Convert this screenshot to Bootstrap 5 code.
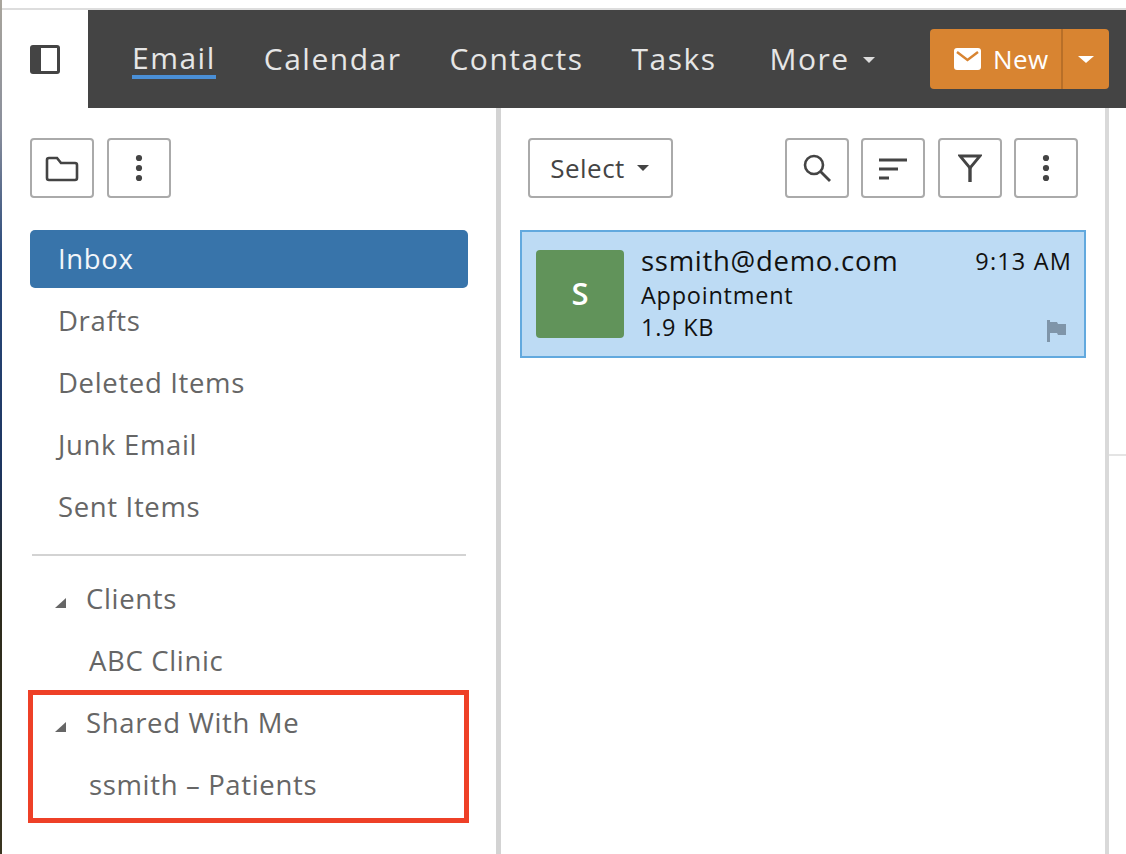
<!DOCTYPE html>
<html lang="en">
<head>
  <meta charset="UTF-8">
  <title>Email</title>
  <link href="https://cdn.jsdelivr.net/npm/bootstrap@5.3.3/dist/css/bootstrap.min.css" rel="stylesheet">
  <style>
    html, body { height: 100%; }
    body { width: 1126px; height: 854px; overflow: hidden; font-family: "Open Sans", sans-serif; padding-left: 2px;
      background: linear-gradient(#a9a59c 0, #8a8f9c 15%, #2a4a7c 30%, #1d3560 55%, #2c2a1c 70%, #3a3520 100%); }
    .app-shell { background: #fff; height: 854px; }
    .top-gap { height: 10px; border-bottom: 2px solid #ddd; }
    .toggle-cell { width: 86px; height: 98px; }
    .main-bar { height: 98px; background: #444; padding-left: 44px; padding-right: 17px; }
    .main-link { color: #e6e6e6; font-size: 30px; letter-spacing: 1.5px; text-decoration: none; margin-right: 48px; line-height: 40px; white-space: nowrap; }
    .main-link.current { border-bottom: 4px solid #4a8fd6; line-height: 35px; height: 39px; margin-top: 1px; }
    .main-link.tasks-link { margin-right: 53px; }
    .caret-down { display: inline-block; border-left: 6.5px solid transparent; border-right: 6.5px solid transparent; border-top: 6px solid currentColor; vertical-align: middle; }
    .more-caret { margin-left: 13px; color: #ddd; position: relative; top: -2px; }
    .new-group { margin-left: auto; width: 179px; height: 60px; background: #d88431; border-radius: 4px; color: #fff; }
    .new-main { width: 131px; padding-left: 24px; font-size: 26px; letter-spacing: .4px; }
    .new-split { width: 48px; height: 100%; border-left: 2px solid #b86f28; color: #fff; }
    .new-split .caret-down { border-left-width: 8px; border-right-width: 8px; border-top-width: 7px; }
    .folder-pane { width: 499px; border-right: 5px solid #d3d3d3; }
    .list-pane { width: 608px; border-right: 4px solid #d9d9d9; }
    .extra-pane { width: 17px; }
    .extra-top { height: 348px; border-bottom: 2px solid #e4e4e4; }
    .tool-btn { height: 60px; border: 2px solid #aaa; border-radius: 4px; background: #fff; color: #444; padding: 0; }
    .tool-wide { width: 64px; }
    .select-btn { width: 145px; font-size: 26px; letter-spacing: .5px; color: #444; padding-right: 2px; }
    .tool-row-a { padding: 30px 0 0 28px; gap: 13px; }
    .tool-row-b { padding: 30px 27px 0 27px; gap: 12.5px; }
    .folder-list { margin: 32px 28px 0 28px; }
    .folder-item { height: 62px; padding-left: 28px; font-size: 27.5px; letter-spacing: .65px; color: #666; white-space: nowrap; }
    .folder-item.picked { height: 58px; margin-bottom: 2px; background: #3874aa; color: #f2f6fa; border-radius: 5px; }
    .folder-sep { height: 2px; background: #d3d3d3; margin: 16px 2px 12px 2px; }
    .folder-item.tree-head { padding-left: 25px; }
    .tree-arrow { width: 11px; height: 10px; margin-right: 20px; margin-top: 8px; fill: #666; flex: none; }
    .shared-box { border: 5px solid #ee4027; margin: -2px -1px 0 -2px; }
    .shared-box .folder-item { margin-left: -3px; }
    .shared-box .tree-head { height: 56px; }
    .shared-box .tree-leaf { height: 67px; }
    .folder-item.tree-leaf { padding-left: 59px; }
    .mail-card { margin: 32px 0 0 19px; width: 566px; height: 128px; background: #bddbf4; border: 2px solid #62a9de; padding: 18px 12px 0 14px; color: #111; }
    .mail-avatar { width: 88px; height: 88px; background: #61935a; border-radius: 4px; color: #fff; font-size: 31px; font-weight: 600; flex: none; padding-bottom: 2px; }
    .mail-info { margin-left: 17px; margin-top: -7px; }
    .mail-from { font-size: 27.5px; letter-spacing: .72px; line-height: 36px; }
    .mail-line { font-size: 23.5px; letter-spacing: .75px; line-height: 32px; }
    .mail-time { font-size: 23.5px; letter-spacing: 1.15px; line-height: 36px; }
    .mail-flag { width: 20px; height: 22px; margin: 7px 6px 0 auto; fill: #7f95a9; display: block; }
  </style>
</head>
<body>
  <div class="app-shell d-flex flex-column">
    <div class="top-gap"></div>
    <header class="d-flex">
      <div class="toggle-cell d-flex align-items-center justify-content-center">
        <svg width="32" height="32" viewBox="0 0 32 32"><rect x="1" y="2" width="30" height="29" rx="3" fill="#444"/><rect x="12" y="5" width="16" height="23" fill="#fff"/></svg>
      </div>
      <nav class="main-bar flex-grow-1 d-flex align-items-center">
        <a class="main-link current" href="#">Email</a>
        <a class="main-link" href="#">Calendar</a>
        <a class="main-link" href="#">Contacts</a>
        <a class="main-link tasks-link" href="#">Tasks</a>
        <a class="main-link" href="#">More<span class="caret-down more-caret"></span></a>
        <div class="new-group d-flex align-items-center">
          <div class="new-main d-flex align-items-center gap-2">
            <svg width="27" height="22" viewBox="0 0 27 22"><rect width="27" height="22" rx="3" fill="#fff"/><path d="M3 4l10.500 8L24 4" fill="none" stroke="#d88431" stroke-width="2.400"/></svg>
            <span class="ms-1">New</span>
          </div>
          <div class="new-split d-flex align-items-center justify-content-center"><span class="caret-down"></span></div>
        </div>
      </nav>
    </header>
    <main class="d-flex flex-grow-1">
      <section class="folder-pane">
        <div class="d-flex tool-row-a">
          <button class="btn tool-btn tool-wide" type="button">
            <svg width="34" height="28" viewBox="0 0 34 28"><path d="M2 6a2 2 0 0 1 2-2h8l4 5h14a2 2 0 0 1 2 2v13a2 2 0 0 1-2 2H4a2 2 0 0 1-2-2z" fill="none" stroke="#444" stroke-width="2.600"/></svg>
          </button>
          <button class="btn tool-btn tool-wide" type="button">
            <svg width="8" height="28" viewBox="0 0 8 28"><circle cx="4" cy="4" r="3.100" fill="#444"/><circle cx="4" cy="14" r="3.100" fill="#444"/><circle cx="4" cy="24" r="3.100" fill="#444"/></svg>
          </button>
        </div>
        <div class="folder-list">
          <div class="folder-item picked d-flex align-items-center">Inbox</div>
          <div class="folder-item d-flex align-items-center">Drafts</div>
          <div class="folder-item d-flex align-items-center">Deleted Items</div>
          <div class="folder-item d-flex align-items-center">Junk Email</div>
          <div class="folder-item d-flex align-items-center">Sent Items</div>
          <div class="folder-sep"></div>
          <div class="folder-item tree-head d-flex align-items-center">
            <svg class="tree-arrow" viewBox="0 0 11 10"><path d="M11 0v10H0z"/></svg>Clients
          </div>
          <div class="folder-item tree-leaf d-flex align-items-center">ABC Clinic</div>
          <div class="shared-box">
            <div class="folder-item tree-head d-flex align-items-center">
              <svg class="tree-arrow" viewBox="0 0 11 10"><path d="M11 0v10H0z"/></svg>Shared With Me
            </div>
            <div class="folder-item tree-leaf d-flex align-items-center">ssmith – Patients</div>
          </div>
        </div>
      </section>
      <section class="list-pane">
        <div class="d-flex tool-row-b">
          <button class="btn tool-btn select-btn d-flex align-items-center justify-content-center gap-2" type="button">Select <span class="caret-down ms-1"></span></button>
          <button class="btn tool-btn tool-wide ms-auto" type="button">
            <svg width="30" height="30" viewBox="0 0 30 30"><circle cx="12" cy="12" r="9" fill="none" stroke="#444" stroke-width="2.600"/><path d="M18.500 18.500L28 28" stroke="#444" stroke-width="2.800"/></svg>
          </button>
          <button class="btn tool-btn tool-wide" type="button">
            <svg width="30" height="24" viewBox="0 0 30 24"><path d="M1 3h28M1 12h19M1 21h10" stroke="#444" stroke-width="3" fill="none"/></svg>
          </button>
          <button class="btn tool-btn tool-wide" type="button">
            <svg width="24" height="28" viewBox="0 0 24 28"><path d="M2 2h20l-10 12z" fill="none" stroke="#444" stroke-width="2.800"/><path d="M12 13v15" stroke="#444" stroke-width="3.400"/></svg>
          </button>
          <button class="btn tool-btn tool-wide" type="button">
            <svg width="8" height="28" viewBox="0 0 8 28"><circle cx="4" cy="4" r="3.100" fill="#444"/><circle cx="4" cy="14" r="3.100" fill="#444"/><circle cx="4" cy="24" r="3.100" fill="#444"/></svg>
          </button>
        </div>
        <div class="mail-card d-flex">
          <div class="mail-avatar d-flex align-items-center justify-content-center">S</div>
          <div class="mail-info flex-grow-1">
            <div class="d-flex justify-content-between">
              <span class="mail-from">ssmith@demo.com</span>
              <span class="mail-time">9:13 AM</span>
            </div>
            <div class="mail-line">Appointment</div>
            <div class="d-flex align-items-center justify-content-between">
              <span class="mail-line">1.9 KB</span>
              <svg class="mail-flag" viewBox="0 0 20 22"><path d="M1 0h3v22H1z"/><path d="M4 2h7l1 2h8v11h-8l-1-2H4z"/></svg>
            </div>
          </div>
        </div>
      </section>
      <section class="extra-pane"><div class="extra-top"></div></section>
    </main>
  </div>
  <script src="https://cdn.jsdelivr.net/npm/bootstrap@5.3.3/dist/js/bootstrap.bundle.min.js"></script>
</body>
</html>
